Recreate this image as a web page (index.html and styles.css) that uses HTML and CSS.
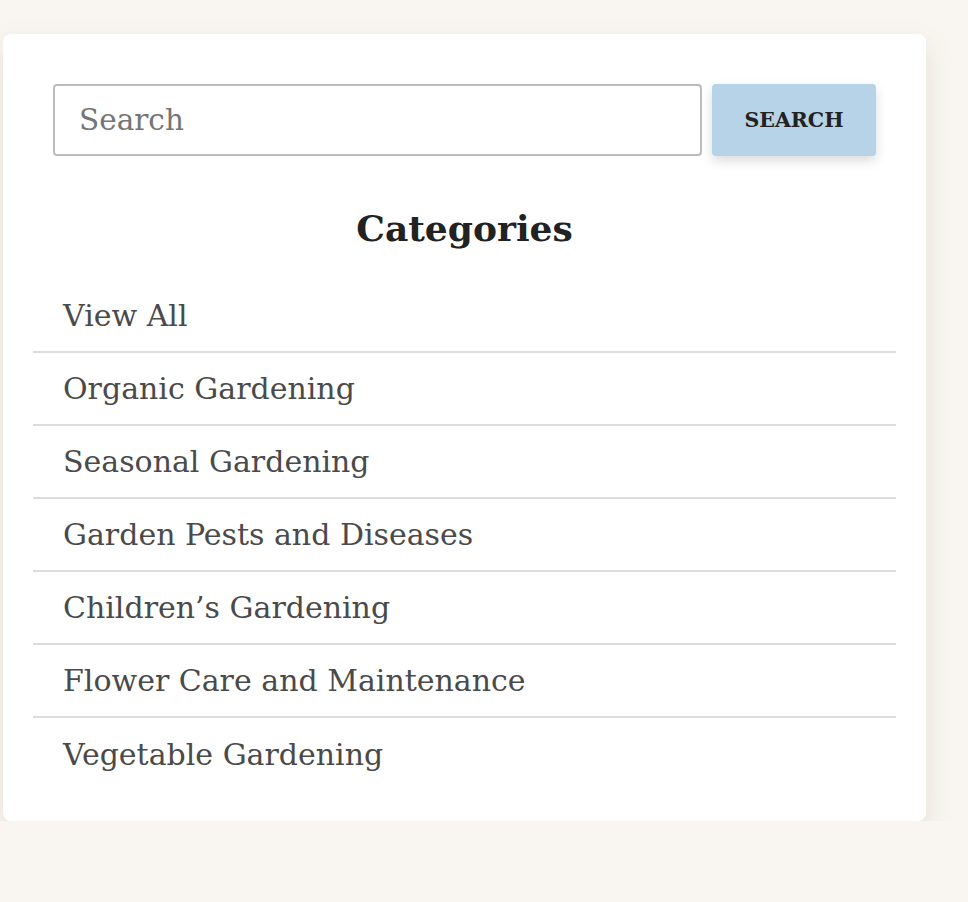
FILE: index.html
```html
<!DOCTYPE html>
<html>
<head>
<meta charset="utf-8">
<link rel="stylesheet" href="styles.css">
</head>
<body>
<aside class="card">
  <form class="search">
    <input class="search-input" type="text" placeholder="Search">
    <button class="search-btn" type="button">SEARCH</button>
  </form>
  <h2 class="title">Categories</h2>
  <ul class="cats">
    <li><a href="#">View All</a></li>
    <li><a href="#">Organic Gardening</a></li>
    <li><a href="#">Seasonal Gardening</a></li>
    <li><a href="#">Garden Pests and Diseases</a></li>
    <li><a href="#">Children’s Gardening</a></li>
    <li><a href="#">Flower Care and Maintenance</a></li>
    <li><a href="#">Vegetable Gardening</a></li>
  </ul>
</aside>
</body>
</html>
```
FILE: styles.css
```css
html, body {
  margin: 0;
  padding: 0;
  background: #f9f6f1;
}
body {
  font-family: "DejaVu Serif", "Liberation Serif", serif;
  padding: 34px 0 0 3px;
}
.card {
  width: 923px;
  box-sizing: border-box;
  background: #fff;
  border-radius: 8px;
  padding: 50px 30px 30px;
  box-shadow: 0 12px 30px rgba(110, 90, 60, 0.14);
}
.search {
  display: flex;
  gap: 10px;
  margin: 0 20px;
}
.search-input {
  flex: 1;
  height: 72px;
  box-sizing: border-box;
  border: 2px solid #bcbcbc;
  border-radius: 4px;
  padding: 0 24px;
  font-family: inherit;
  font-size: 29.5px;
  color: #333;
  outline: none;
}
.search-input::placeholder {
  color: #757575;
}
.search-btn {
  width: 164px;
  height: 72px;
  border: none;
  border-radius: 4px;
  background: #b7d3e7;
  color: #222;
  font-family: inherit;
  font-weight: bold;
  font-size: 20.5px;
  box-shadow: 0 5px 12px rgba(0, 0, 0, 0.14);
}
.title {
  text-align: center;
  font-size: 36px;
  font-weight: bold;
  color: #222;
  margin: 46px 0 26px;
  line-height: 52px;
}
.cats {
  list-style: none;
  margin: 0;
  padding: 0;
}
.cats li {
  border-bottom: 2px solid #dcdcdc;
  height: 73px;
  box-sizing: border-box;
  display: flex;
  align-items: center;
  padding-left: 30px;
}
.cats li:last-child {
  border-bottom: none;
}
.cats a {
  color: #4a4a4a;
  text-decoration: none;
  font-size: 30px;
}
```
